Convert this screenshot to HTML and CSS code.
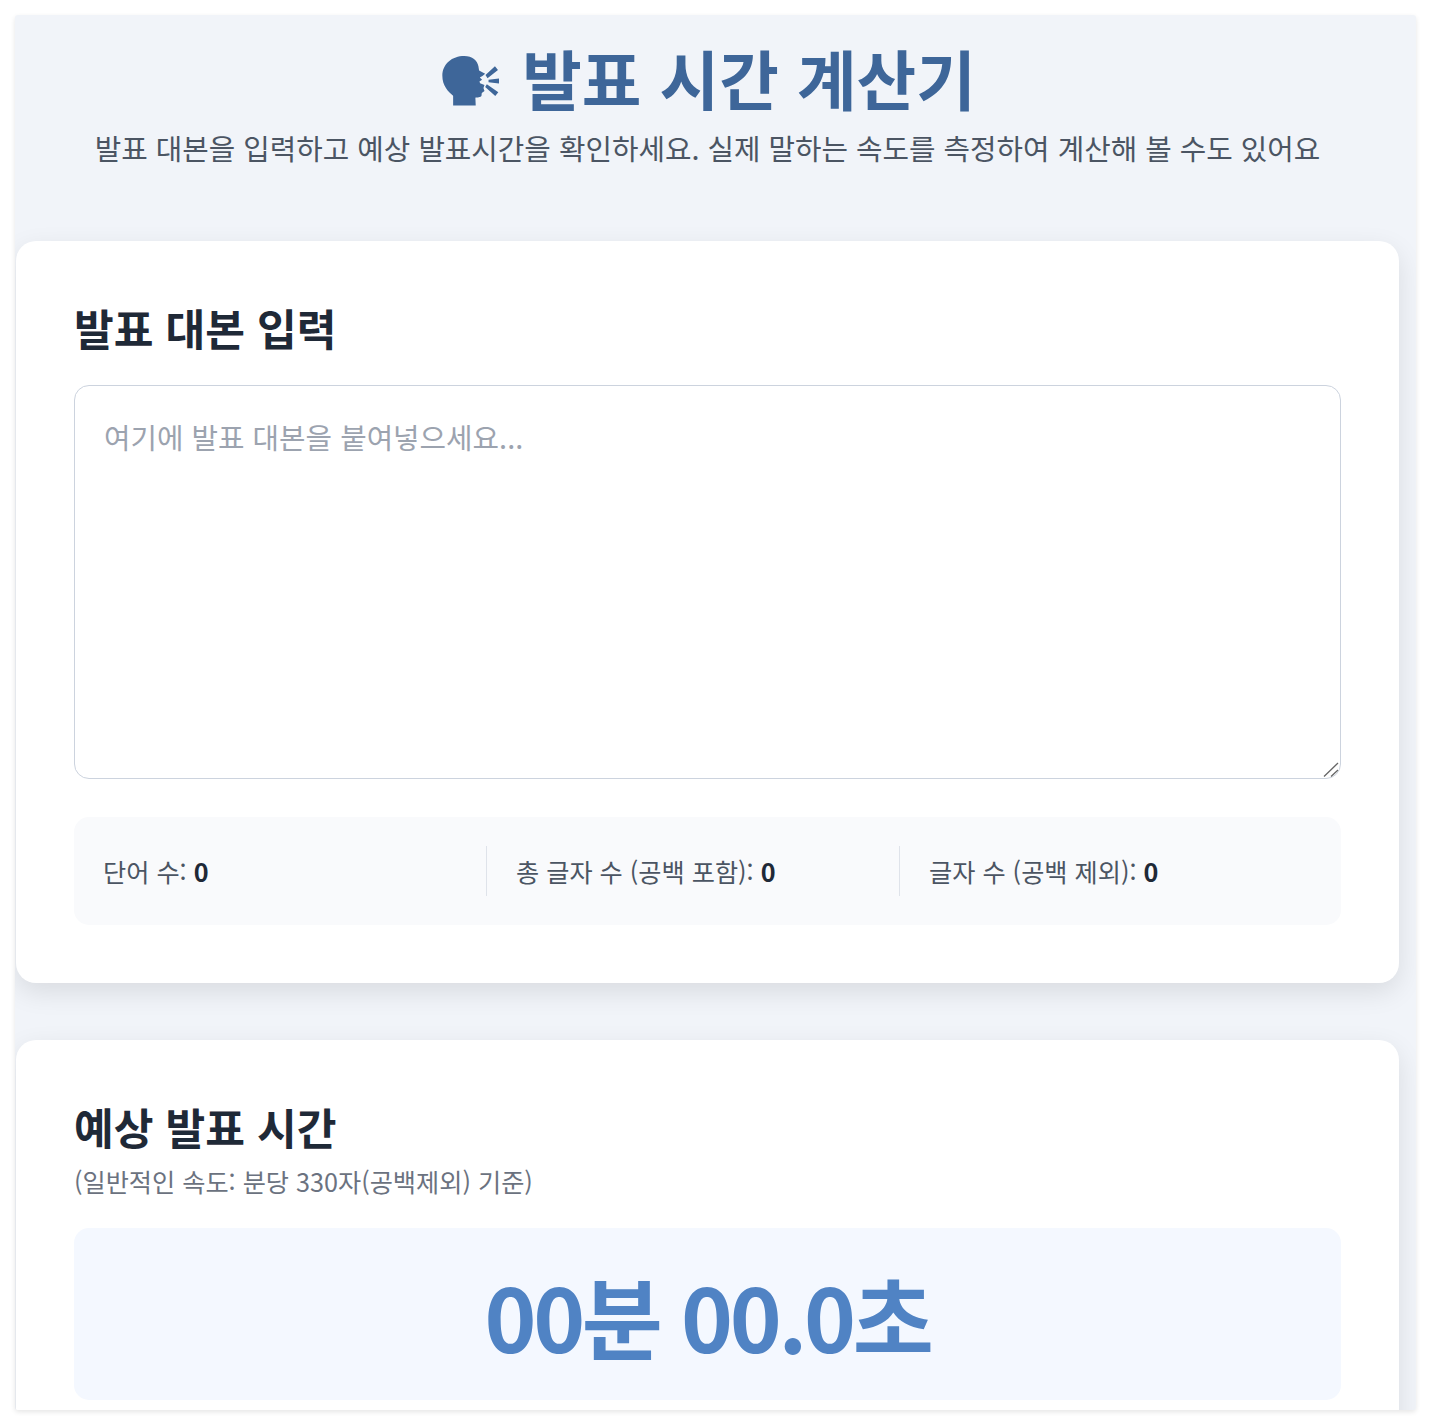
FILE: index.html
```html
<!DOCTYPE html>
<html lang="ko">
<head>
<meta charset="utf-8">
<title>발표 시간 계산기</title>
<link rel="stylesheet" href="styles.css">
</head>
<body>
<div class="frame">
  <div class="scroll">
    <header class="head">
      <h1 class="title">
        <svg class="speak" viewBox="40 45 172 150" aria-hidden="true"><path d="M73 194V165C58 153 41 135 41 106C41 70 70 47 106 47C130 47 145 60 148 78L150 90L168 100L160 107L152 111L159 118L151 123L153 128L166 133L163 142L166 151L158 157L157 166C150 172 142 170 139 171L140 194Z"/><path d="M169 104L197 78L206 89L175 113ZM178 118L209 114L209 129L178 125ZM173 131L207 155L198 166L168 139Z"/></svg>
        <span>발표 시간 계산기</span>
      </h1>
      <p class="lead">발표 대본을 입력하고 예상 발표시간을 확인하세요. 실제 말하는 속도를 측정하여 계산해 볼 수도 있어요</p>
    </header>
    <section class="card first">
      <h2 class="heading">발표 대본 입력</h2>
      <div class="field">
        <textarea class="script" placeholder="여기에 발표 대본을 붙여넣으세요..."></textarea>
        <svg class="grip" viewBox="0 0 16 15" aria-hidden="true"><path d="M1 14.500L15 1M8 14.500L15 8"/></svg>
      </div>
      <div class="stats">
        <div class="stat">단어 수: <b>0</b></div>
        <div class="stat">총 글자 수 (공백 포함): <b>0</b></div>
        <div class="stat">글자 수 (공백 제외): <b>0</b></div>
      </div>
    </section>
    <section class="card">
      <h2 class="heading">예상 발표 시간</h2>
      <p class="note">(일반적인 속도: 분당 330자(공백제외) 기준)</p>
      <div class="result">00분 00.0초</div>
    </section>
  </div>
</div>
</body>
</html>
```
FILE: styles.css
```css
* { box-sizing: border-box; }
html, body { height: 100%; }
body {
  margin: 0;
  padding: 15px 15px 15px 15px;
  background: #fff;
  font-family: "Noto Sans CJK KR", "Noto Sans", sans-serif;
  color: #1f2937;
}
.frame {
  height: 1395px;
  background: #f1f4f9;
  border-radius: 3px;
  overflow: hidden;
  box-shadow: 0 2px 5px rgba(0, 0, 0, .1);
}
.scroll { padding-left: 1px; width: 1384px; }
.head { text-align: center; height: 226px; padding-top: 20px; }
.title {
  margin: 0;
  padding-left: 3px;
  display: flex;
  justify-content: center;
  align-items: center;
  gap: 22px;
  font-size: 64.800px;
  font-weight: 700;
  line-height: 84px;
  color: #3e6699;
}
.speak { width: 58px; height: 51px; fill: #3e6699; margin-top: 6px; }
.lead { margin: 8px 0 0; font-size: 28.800px; line-height: 42px; color: #4b5563; }
.card {
  background: #fff;
  border-radius: 20px;
  padding: 55px 58px 58px;
  box-shadow: 0 9px 27px rgba(0, 0, 0, .1);
}
.first { margin-bottom: 57px; height: 742px; }
.heading { margin: 0; font-size: 43.200px; font-weight: 700; line-height: 62px; color: #1f2937; }
.field { position: relative; margin-top: 27px; }
.script {
  display: block;
  width: 100%;
  height: 394px;
  padding: 30px 29px;
  border: 1px solid #ccd3de;
  border-radius: 15px;
  font-family: inherit;
  font-size: 28.800px;
  line-height: 42px;
  outline: none;
  resize: none;
}
.script::placeholder { color: #9ca3af; }
.grip {
  position: absolute;
  right: 2px;
  bottom: 2px;
  width: 16px;
  height: 15px;
  fill: none;
  stroke: #666;
  stroke-width: 1.300;
}
.stats {
  display: flex;
  margin-top: 38px;
  height: 108px;
  padding: 29px;
  background: #f9fafc;
  border-radius: 15px;
}
.stat {
  flex: 1 1 0;
  padding-left: 29px;
  font-size: 25.200px;
  line-height: 50px;
  color: #4b5563;
  border-left: 1px solid #dfe3ea;
}
.stat:first-child { padding-left: 0; border-left: 0; }
.stat b { font-weight: 700; color: #1f2937; }
.note { margin: 1px 0 0; font-size: 25.200px; line-height: 46px; color: #6b7280; }
.result {
  margin-top: 24px;
  height: 172px;
  background: #f4f8ff;
  border-radius: 15px;
  text-align: center;
  font-size: 88.200px;
  font-weight: 700;
  letter-spacing: -3.300px;
  line-height: 173px;
  color: #5083c4;
}
```
